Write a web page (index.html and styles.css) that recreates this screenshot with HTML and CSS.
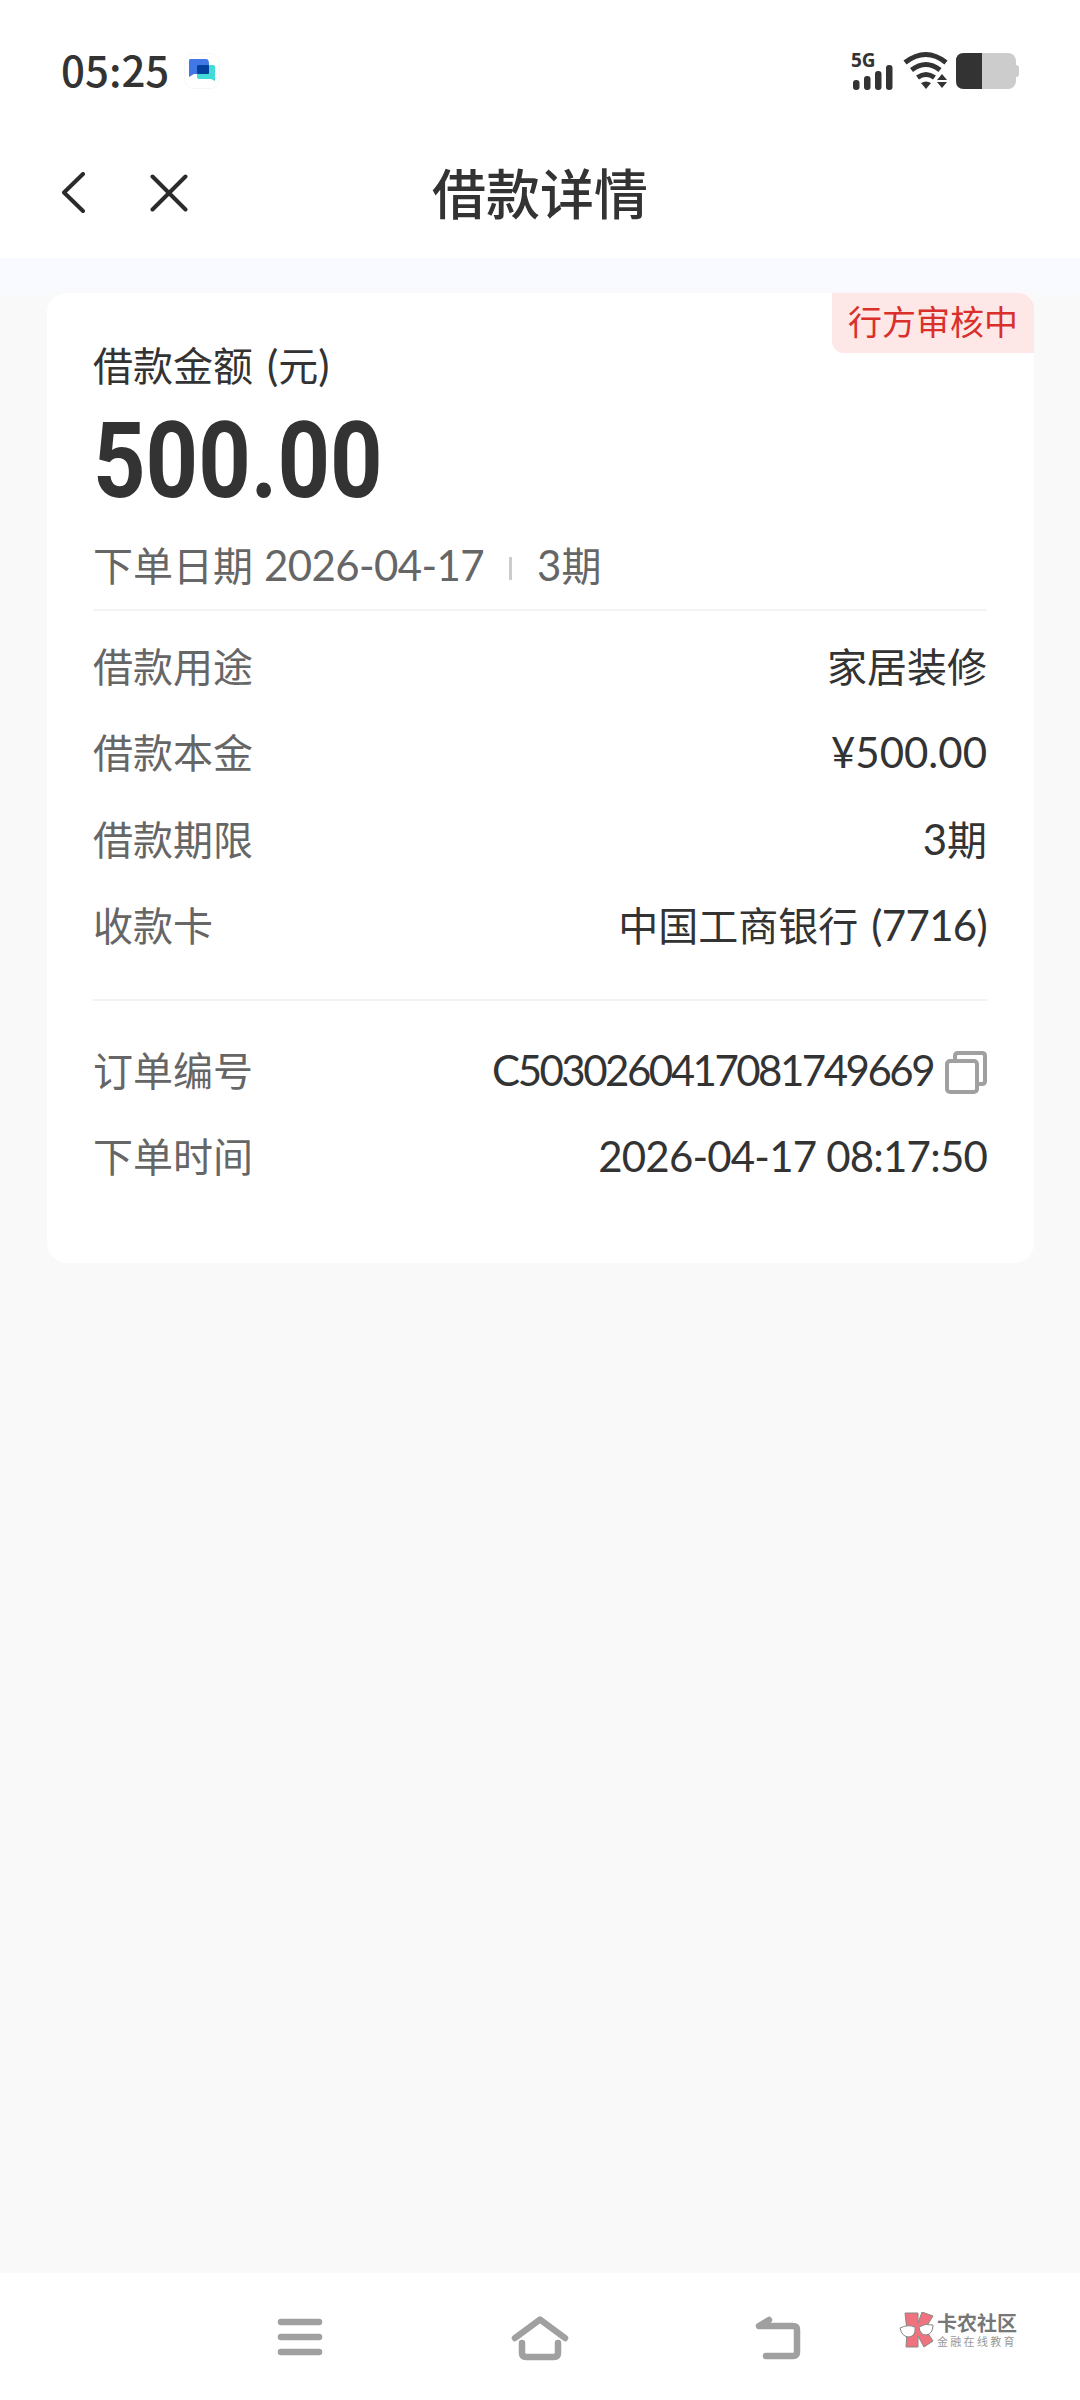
FILE: index.html
```
<!DOCTYPE html>
<html lang="zh-CN">
<head>
<meta charset="UTF-8">
<meta name="viewport" content="width=device-width, initial-scale=1">
<title>借款详情</title>
<link rel="stylesheet" href="styles.css">
</head>
<body>
<div class="page">
  <div class="statusbar">
    <span class="time">05:25</span>
    <svg class="app-icon" width="36" height="36" viewBox="0 0 36 36">
      <rect x=".5" y=".5" width="35" height="35" rx="9" fill="#fff" stroke="#f7f7f7"/>
      <path d="M6 6h16q3 0 3 5v10H10l-5 3V8q0-2 1-2z" fill="#4278e6"/>
      <path d="M15 12h14q2 0 2 2v14l-4-2H15q-2 0-2-2V14q0-2 2-2z" fill="#3fdcd9"/>
      <rect x="13" y="12" width="12" height="9" rx="1" fill="#04409c"/>
    </svg>
    <div class="status-right">
      <div class="signal">
        <span class="net">5G</span>
        <svg width="42" height="26" viewBox="0 0 42 26" fill="#333">
          <rect x="2" y="15" width="6.500" height="10" rx="3"/>
          <rect x="13" y="11" width="6.500" height="14" rx="3"/>
          <rect x="24" y="6" width="6.500" height="19" rx="3"/>
          <rect x="35" y="0" width="6.500" height="25" rx="3"/>
        </svg>
      </div>
      <svg class="wifi" width="46" height="40" viewBox="0 0 46 40" fill="none" stroke="#333" stroke-width="5">
        <path d="M2 11.500Q23 -4.500 43 11.500"/>
        <path d="M8.500 19Q23 8 37 19"/>
        <path d="M14.500 26.500Q23 20.500 31.500 26.500"/>
        <path d="M18 32q5-3 10 0l-5 6z" fill="#333" stroke="none"/>
        <path d="M39 23l5 6H34zM39 37l5-6H34z" fill="#333" stroke="none"/>
      </svg>
      <svg class="battery" width="64" height="36" viewBox="0 0 64 36">
        <rect x="0" y="0" width="60" height="36" rx="8" fill="#ccc"/>
        <path d="M8 0h18v36H8q-8 0-8-8V8q0-8 8-8z" fill="#333"/>
        <path d="M60 12q3 0 3 3v6q0 3-3 3z" fill="#ccc"/>
      </svg>
    </div>
  </div>

  <div class="navbar">
    <svg class="nav-back" width="24" height="42" viewBox="0 0 24 42">
      <path d="M22 2L3 20.500L22 39"/>
    </svg>
    <svg class="nav-close" width="38" height="38" viewBox="0 0 38 38">
      <path d="M2.500 2.500L35.500 35.500M35.500 2.500L2.500 35.500"/>
    </svg>
    <h1>借款详情</h1>
  </div>

  <div class="content">
    <div class="card">
      <span class="tag">行方审核中</span>
      <p class="amount-label">借款金额 <span class="num paren">(</span>元<span class="num">)</span></p>
      <p class="amount">500.00</p>
      <p class="date"><span>下单日期</span><span class="num date-num">2026-04-17</span><i></i><span><span class="num">3</span>期</span></p>

      <div class="rows">
        <div class="row"><span>借款用途</span><b>家居装修</b></div>
        <div class="row"><span>借款本金</span><b class="num">¥500.00</b></div>
        <div class="row"><span>借款期限</span><b><span class="num">3</span>期</b></div>
        <div class="row"><span>收款卡</span><b>中国工商银行 <span class="num card-num">(7716)</span></b></div>
      </div>

      <div class="rows order">
        <div class="row">
          <span>订单编号</span>
          <b class="num order-no">C5030260417081749669</b>
          <svg class="copy" width="42" height="43" viewBox="0 0 42 43">
            <path d="M10 9V5q0-3 3-3h24q3 0 3 3v25q0 3-3 3h-4"/>
            <rect x="2" y="10" width="30" height="31" rx="3"/>
          </svg>
        </div>
        <div class="row"><span>下单时间</span><b class="num order-time">2026-04-17 08:17:50</b></div>
      </div>
    </div>
  </div>

  <div class="sysbar">
    <svg width="46" height="46" viewBox="0 0 46 46">
      <path d="M4 6h38M4 21h38M4 36h38"/>
    </svg>
    <svg width="58" height="46" viewBox="0 0 58 46">
      <path d="M4 22L29 3.500L54 22M11 27v10q0 4 4 4h28q4 0 4-4V27"/>
    </svg>
    <svg width="50" height="46" viewBox="0 0 50 46">
      <path d="M14 4L4 10h34q4 0 4 4v22q0 4-4 4H11"/>
    </svg>
    <div class="brand">
      <svg width="36" height="36" viewBox="0 0 36 36">
        <path d="M6 1h13v10l4-11 11 4-8 13 8 12-9 6-6-11v11H7l1-16z" fill="#ef737e" stroke="#888" stroke-width="1"/>
        <path d="M1 16q8-4 15-1 1 9-6 10-7 0-9-9zM20 15q6-4 14-2 0 9-7 10-6 0-7-8z" fill="#fff" stroke="#888" stroke-width="1"/>
      </svg>
      <div class="brand-text">
        <strong>卡农社区</strong>
        <small>金融在线教育</small>
      </div>
    </div>
  </div>
</div>
</body>
</html>
```
FILE: styles.css
```
* { box-sizing: border-box; }
body {
  margin: 0;
  background: #f9f9f9;
  color: #333;
  font-family: "Noto Sans CJK SC", sans-serif;
}
h1, p { margin: 0; font-weight: 400; }
svg { display: block; flex: none; }
.page {
  width: 1080px;
  height: 2400px;
  display: flex;
  flex-direction: column;
  overflow: hidden;
}
.num {
  font-family: Lato, "Noto Sans CJK SC", sans-serif;
  font-size: 42px;
  line-height: 1;
}

/* status bar */
.statusbar {
  height: 142px;
  background: #fff;
  display: flex;
  align-items: center;
  padding: 0 60px;
}
.time {
  font-size: 42px;
  font-weight: 500;
  line-height: 60px;
  width: 124px;
  padding: 0 0 5px 1px;
}
.status-right {
  margin-left: auto;
  display: flex;
  align-items: center;
}
.signal { width: 52px; height: 38px; }
.net {
  display: block;
  font: 700 19px/16px "Noto Sans", sans-serif;
  height: 13px;
}
.wifi { margin-right: 7px; }

/* title bar */
.navbar {
  position: relative;
  height: 116px;
  background: #fff;
  display: flex;
  align-items: center;
  padding: 0 61px 14px;
}
.navbar svg {
  fill: none;
  stroke: #2b2b2b;
  stroke-width: 4;
  stroke-linecap: round;
  stroke-linejoin: round;
}
.nav-close { margin-left: 65px; }
.navbar h1 {
  position: absolute;
  left: 0;
  right: 0;
  top: 10px;
  text-align: center;
  font-size: 54px;
  font-weight: 500;
  line-height: 80px;
  pointer-events: none;
}

/* card */
.content {
  flex: 1;
  padding: 35px 46px 0 47px;
  background: linear-gradient(#f9faff, #f9faff 30px, #f9f9f9 42px);
}
.card {
  position: relative;
  height: 970px;
  background: #fff;
  border-radius: 20px;
  padding: 41px 47px 0 46px;
}
.tag {
  position: absolute;
  top: 0;
  right: 0;
  width: 202px;
  height: 60px;
  padding-left: 16px;
  background: #fde7e7;
  color: #d9302c;
  border-radius: 0 16px 0 12px;
  font-size: 34px;
  line-height: 56px;
  white-space: nowrap;
}
.amount-label {
  font-size: 40px;
  line-height: 60px;
}
.paren { margin-left: 5px; }
.amount {
  font: 700 106px/134px Roboto, sans-serif;
  transform: scaleX(.865);
  transform-origin: left;
  height: 137px;
}
.date {
  display: flex;
  align-items: baseline;
  height: 78px;
  font-size: 40px;
  line-height: 66px;
  color: #666;
  white-space: nowrap;
}
.date-num {
  margin-left: 11px;
  letter-spacing: -.6px;
}
.date i {
  align-self: flex-start;
  width: 3px;
  height: 23px;
  margin: 26px 25px 0;
  background: #ccc;
}
.rows {
  border-top: 2px solid #f3f3f3;
  padding-top: 11px;
  height: 390px;
}
.order { padding-top: 25px; }
.row {
  display: flex;
  align-items: baseline;
  height: 86.4px;
  font-size: 40px;
  line-height: 86px;
  white-space: nowrap;
  color: #666;
}
.row b {
  margin-left: auto;
  font-weight: 400;
  color: #333;
}
.card-num {
  margin-left: 4px;
  letter-spacing: -.7px;
}
.copy {
  align-self: flex-start;
  margin: 25px 0 0 12px;
  fill: none;
  stroke: #a0a0a0;
  stroke-width: 4;
}
.order-no { letter-spacing: -2.5px; }
.order-time { letter-spacing: -.8px; }

/* system buttons */
.sysbar {
  height: 127px;
  background: #fff;
  display: flex;
  align-items: flex-start;
  padding: 43px 0 0 277px;
}
.sysbar > svg {
  fill: none;
  stroke: #a0a0a0;
  stroke-width: 6.500;
  stroke-linecap: round;
  stroke-linejoin: round;
}
.sysbar > svg + svg { margin-left: 188px; }
.sysbar > svg:nth-child(3) { margin-left: 186px; }
.brand {
  display: flex;
  margin-left: 94px;
  margin-top: -4px;
}
.brand-text {
  display: flex;
  flex-direction: column;
  margin-left: 2px;
  white-space: nowrap;
}
.brand strong {
  font-size: 20px;
  font-weight: 700;
  line-height: 22px;
  color: #777;
}
.brand small {
  font-size: 11px;
  line-height: 14px;
  letter-spacing: 2.300px;
  color: #999;
}
```
